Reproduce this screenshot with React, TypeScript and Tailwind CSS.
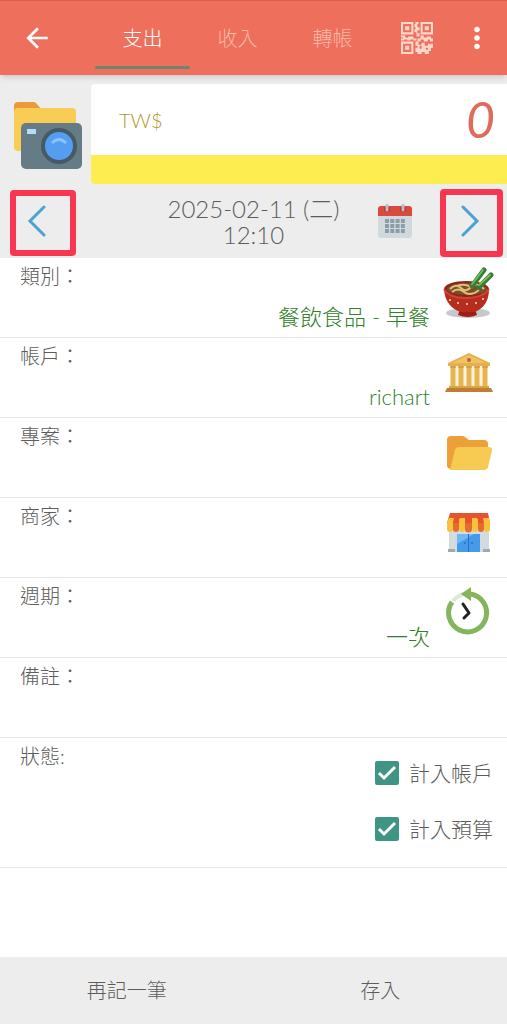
import React, { useState } from 'react'
import { MdArrowBack, MdMoreVert } from 'react-icons/md'

const PhotoIcon = () => (
  <svg viewBox="0 0 68 68" className="w-[68px] h-[68px]">
    <path d="M0 10V4q0-4 4-4h15q2 0 3 1l6 7z" fill="#eb9a38" />
    <path d="M0 10q0-4 4-4h54q4 0 4 4v35q0 4-4 4H4q-4 0-4-4z" fill="#f8cc55" />
    <rect x="7" y="21" width="61" height="46" rx="5" fill="#657b85" />
    <rect x="13" y="27" width="9" height="5" fill="#b6dcf8" />
    <circle cx="45" cy="44" r="18" fill="#455a65" />
    <circle cx="45" cy="44" r="14" fill="#549df0" />
    <path d="M38 41q7-7 14 0" fill="none" stroke="#8cc3f8" strokeWidth="3" />
  </svg>
)

const QrIcon = () => (
  <svg viewBox="0 0 31 31" className="w-8 h-8" fill="#ffd8cb">
    <path fillRule="evenodd" d="M0 0h12v12H0zM2 2v8h8V2zM19 0h12v12H19zM21 2v8h8V2zM0 19h12v12H0zM2 21v8h8v-8z" />
    <path d="M4 4h4v4H4zM23 4h4v4h-4zM4 23h4v4H4z" />
    <path d="M14 0h3v2h-1v3h2v3h-2v3h2v3h-3v-4h-2V7h1V5h-1V2h1zM0 13h4v2h3v-1h5v2h3v2h-3v-1H9v1H6v-1H3v1H0v-2h2v-1H0zM19 13h3v2h3v-1h4v2h2v3h-3v-2h-2v2h-4v-2h-3v2h-3v-3h3zM14 19h3v3h3v-2h3v3h3v-2h5v4h-2v3h-2v3h-4v-2h-3v2h-4v-2h-2v-4h2v-2h-2zM18 23v3h2v-3zM24 25v2h2v-2z" fillRule="evenodd" />
  </svg>
)

const CalendarIcon = () => (
  <svg viewBox="0 0 34 34" className="w-[34px] h-[34px]">
    <path d="M0 11h34v20q0 3-3 3H3q-3 0-3-3z" fill="#d0d9de" />
    <path d="M0 12V5q0-3 3-3h28q3 0 3 3v7z" fill="#db4a3e" />
    <circle cx="9" cy="5" r="3" fill="#b63630" />
    <circle cx="25" cy="5" r="3" fill="#b63630" />
    <path d="M9 1v5M25 1v5" stroke="#b4c1c8" strokeWidth="3" strokeLinecap="round" />
    <path d="M7 17h20M7 22h20M7 27h20" stroke="#8b9ea8" strokeWidth="4" strokeDasharray="4 1.3" />
  </svg>
)

const BowlIcon = () => (
  <svg viewBox="0 0 52 52" className="w-[52px] h-[52px]">
    <ellipse cx="25" cy="46" rx="22" ry="5" fill="#c5c9ca" />
    <path d="M17 42h15l2 6q-9 4-19 0z" fill="#9d1f15" />
    <path d="M1 22q1 17 16 23h15Q46 39 46 22z" fill="#b62c1e" />
    <ellipse cx="23.500" cy="22" rx="22.500" ry="8" fill="#8e2419" />
    <ellipse cx="24" cy="22" rx="20" ry="6" fill="#77512a" />
    <path d="M7 22q6-6 11-1t10-1 13 2M9 25q6-5 12 0t15-2M14 19q7-3 14 1" fill="none" stroke="#e3bd77" strokeWidth="2" />
    <path d="M1 22q5 9 22 9t23-9" fill="none" stroke="#cf4430" strokeWidth="2" />
    <path d="M29 19 41 3M36 20 48 8" fill="none" stroke="#327f34" strokeWidth="5" strokeLinecap="round" />
    <path d="M29 17 40 3M36 18 47 8" fill="none" stroke="#78b95a" strokeWidth="2" strokeLinecap="round" />
    <g fill="#ffe1ca"><circle cx="7" cy="33" r="1" /><circle cx="15" cy="36" r="1" /><circle cx="24" cy="37" r="1" /><circle cx="33" cy="36" r="1" /><circle cx="40" cy="32" r="1" /></g>
  </svg>
)

const BankIcon = () => (
  <svg viewBox="0 0 52 52" className="w-[52px] h-[52px]">
    <path d="M5 16 26 6l21 10v3H5z" fill="#e7b04b" />
    <path d="M9 16 26 8l17 8z" fill="#efc365" />
    <circle cx="26" cy="13" r="2" fill="#b36a2c" />
    <path d="M8 19h36v22H8z" fill="#fff6dd" />
    <path d="M10 19v21M18 19v21M26 19v21M34 19v21M42 19v21" stroke="#e8b34e" strokeWidth="5" />
    <path d="M7 20h6M15 20h6M23 20h6M31 20h6M39 20h6" stroke="#c58b37" strokeWidth="1" />
    <path d="M6 39h40v2H6z" fill="#e0a341" />
    <path d="M4 41h44l2 4H2z" fill="#c17c36" />
  </svg>
)

const FolderIcon = () => (
  <svg viewBox="0 0 52 52" className="w-[52px] h-[52px]">
    <path d="M4 13q0-4 4-4h11q2 0 3 1l4 3h15q4 0 4 4v22q0 3-3 3H8q-4 0-4-4z" fill="#eda03a" />
    <path d="M12 23q1-3 4-3h29q5 0 4 4l-4 16q-1 3-4 3H7z" fill="#f7cb52" />
  </svg>
)

const ShopIcon = () => (
  <svg viewBox="0 0 52 52" className="w-[52px] h-[52px]">
    <path d="M6 18h40v27H6z" fill="#d3dbde" />
    <path d="M5 42h7v3H5zM40 42h7v3h-7z" fill="#9cabb2" />
    <path d="M14 27h23v18H14z" fill="#459be9" />
    <path d="M14 27h17L14 37z" fill="#70b8f5" />
    <path d="M25 27h1v18h-1z" fill="#2470bd" />
    <path d="M22 35v2M29 35v2" stroke="#1b61a6" strokeWidth="1" />
    <path d="M7 6h38l2 10v6H4v-6z" fill="#e7532f" />
    <path d="M4 16h6v6a3 3 0 0 1-6 0zM16 12h6v10a3 3 0 0 1-6 0zM29 12h6v10a3 3 0 0 1-6 0zM41 15h6v7a3 3 0 0 1-6 0zM6 11h5l-1 5H4zM17 11h5v5h-6zM29 11h5l1 5h-6zM40 11h6l1 5h-6z" fill="#fac23b" />
    <path d="M10 16h6v6a3 3 0 0 1-6 0zM22 16h7v6a3 3 0 0 1-7 0zM35 16h6v6a3 3 0 0 1-6 0z" fill="#e66b2e" />
  </svg>
)

const CycleIcon = () => (
  <svg viewBox="0 0 52 52" className="w-[52px] h-[52px]">
    <path d="M10 14Q15 8 24 6" fill="none" stroke="#dde8d3" strokeWidth="4" />
    <path d="M9 15A19 19 0 1 0 27 7" fill="none" stroke="#84b45b" strokeWidth="5" />
    <path d="M18 7 28 0v14z" fill="#84b45b" />
    <path d="m20 17 6 9-5 5" fill="none" stroke="#222" strokeWidth="3" strokeLinecap="round" strokeLinejoin="round" />
  </svg>
)

const Chevron = ({ d }: { d: string }) => (
  <svg viewBox="0 0 20 32" className="w-5 h-8" fill="none" stroke="#4aa3d3" strokeWidth="3" strokeLinecap="round">
    <path d={d} />
  </svg>
)

const tabs = ['支出', '收入', '轉帳']

const rows = [
  { label: '類別：', value: '餐飲食品 - 早餐', icon: <BowlIcon /> },
  { label: '帳戶：', value: 'richart', icon: <BankIcon /> },
  { label: '專案：', value: '', icon: <FolderIcon /> },
  { label: '商家：', value: '', icon: <ShopIcon /> },
  { label: '週期：', value: '一次', icon: <CycleIcon /> },
]

const CheckItem = ({ label }: { label: string }) => (
  <label className="flex items-center gap-2.5 h-14 text-[21px]">
    <span className="relative flex">
      <input type="checkbox" defaultChecked className="peer appearance-none w-6 h-6 rounded-xs border-2 border-[#3f9585] checked:bg-[#3f9585]" />
      <svg viewBox="0 0 24 24" className="absolute inset-0 hidden peer-checked:block pointer-events-none" fill="none" stroke="white" strokeWidth="3">
        <path d="m4 12 5 5L20 6" />
      </svg>
    </span>
    {label}
  </label>
)

const App = () => {
  const [active, setActive] = useState(0)
  const [amount, setAmount] = useState('0')

  return (
    <div className="min-h-screen flex flex-col bg-white text-[#5c5c5c] font-light font-[Lato,'Noto_Sans_CJK_TC',sans-serif]">
      <header className="relative flex h-[75px] bg-[#ee705c] border-t border-[#d4604f] text-white shadow-md">
        <button aria-label="Back" className="w-[95px] pl-[21px] flex items-center">
          <MdArrowBack size={32} />
        </button>
        <nav className="flex-3 flex text-xl">
          {tabs.map((tab, i) => (
            <button
              key={tab}
              onClick={() => setActive(i)}
              className={`flex-1 flex flex-col justify-between pt-[23px] pb-1.5 ${active === i ? '' : 'text-[#f9b9aa]'}`}
            >
              <span className="self-center">{tab}</span>
              <span className={`w-full h-[3px] rounded-full ${active === i ? 'bg-[#6e8470]' : ''}`} />
            </button>
          ))}
        </nav>
        <div className="w-[127px] flex items-center pl-[21px] gap-[27px]">
          <button aria-label="QR code"><QrIcon /></button>
          <button aria-label="More"><MdMoreVert size={34} /></button>
        </div>
      </header>

      <section className="bg-[#ededed]">
        <div className="flex pt-[9px]">
          <button aria-label="Photo" className="w-[91px] pl-3.5 pt-1"><PhotoIcon /></button>
          <div className="flex-1 min-w-0 rounded-l-sm overflow-hidden bg-white">
            <div className="flex items-center h-[71px] pl-7 pr-3">
              <label htmlFor="amount" className="text-xl text-[#b39629]">TW$</label>
              <input
                id="amount"
                value={amount}
                onChange={(e) => setAmount(e.target.value)}
                className="flex-1 min-w-0 h-[60px] bg-transparent text-right text-[50px] italic font-normal text-[#df6c5b] outline-none"
              />
            </div>
            <div className="h-[29px] bg-[#fded50]" />
          </div>
        </div>
        <div className="grid grid-cols-[1fr_auto_1fr] items-center h-[74px]">
          <button aria-label="Previous day" className="ml-2.5 w-[66px] h-[66px] pb-1 pl-[11px] rounded-sm border-6 border-[#f9364f] flex items-center mt-1">
            <Chevron d="M17 2 3 16l14 14" />
          </button>
          <button className="flex flex-col items-center pt-0.5 text-2xl leading-[26px]">
            <span>2025-02-11 (二)</span>
            <span>12:10</span>
          </button>
          <div className="flex items-center justify-between pl-[38px] pr-1">
            <button aria-label="Calendar"><CalendarIcon /></button>
            <button aria-label="Next day" className="w-[63px] h-[68px] pb-1 pl-[14px] rounded-sm border-6 border-[#f9364f] flex items-center mt-1">
              <Chevron d="m3 2 14 14L3 30" />
            </button>
          </div>
        </div>
      </section>

      <main className="flex-1 text-xl">
        {rows.map((row) => (
          <button key={row.label} className="w-full h-20 flex items-start pl-5 pr-3 border-b border-[#e8e8e8]">
            <span className="pt-1">{row.label}</span>
            <span className="flex-1 self-end pb-1 text-right text-[22px] text-[#2f8029]">{row.value}</span>
            <span className="ml-[13px] mt-[9px]">{row.icon}</span>
          </button>
        ))}
        <label className="h-20 flex items-start pl-5 pr-3 pt-1 border-b border-[#e8e8e8]">
          備註：
          <input className="flex-1 h-full outline-none" />
        </label>
        <div className="flex items-start justify-between pl-5 pr-3.5 pb-2.5 border-b border-[#e8e8e8]">
          <span className="pt-1">狀態:</span>
          <div className="pt-[7px]">
            <CheckItem label="計入帳戶" />
            <CheckItem label="計入預算" />
          </div>
        </div>
      </main>

      <footer className="flex h-[67px] pb-0.5 bg-[#ededed] text-xl">
        <button className="flex-1">再記一筆</button>
        <button className="flex-1">存入</button>
      </footer>
    </div>
  )
}

export default App
